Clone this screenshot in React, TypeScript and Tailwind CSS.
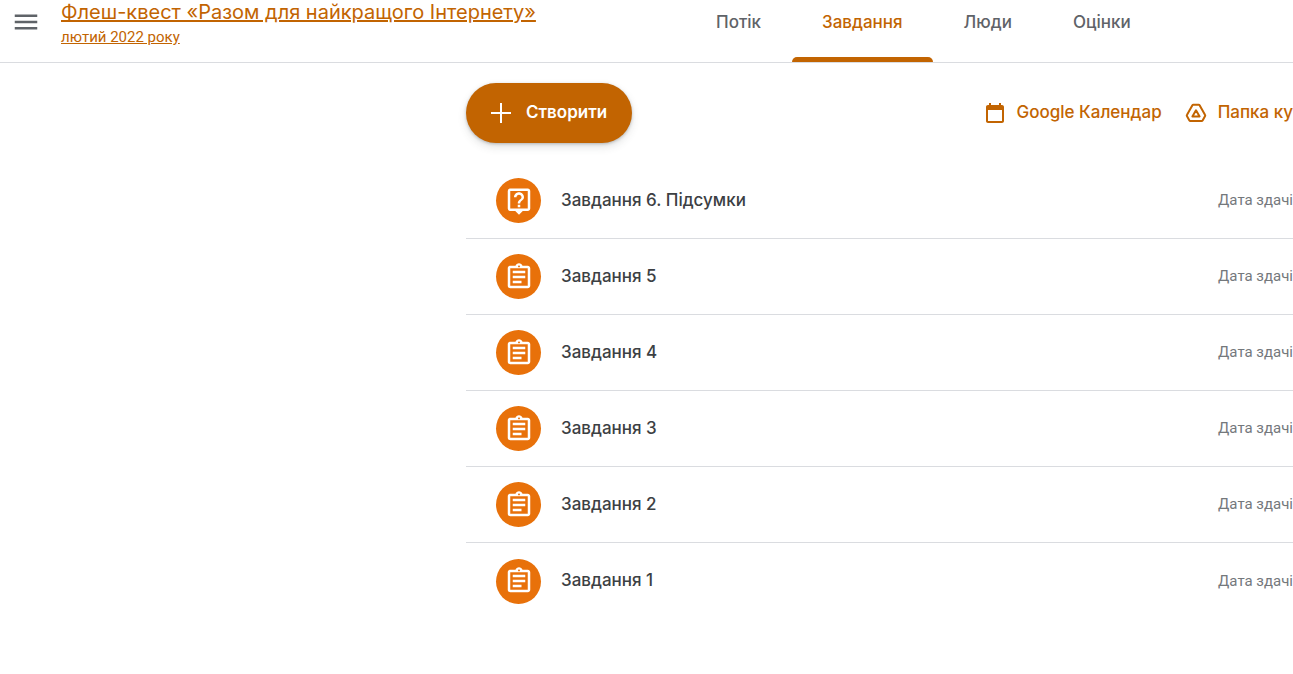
import type { ReactNode } from 'react';
import clsx from 'clsx';

interface Assignment {
  title: string;
  kind: 'question' | 'task';
}

const TABS = ['Потік', 'Завдання', 'Люди', 'Оцінки'];
const ACTIVE_TAB = 'Завдання';

const ASSIGNMENTS: Assignment[] = [
  { title: 'Завдання 6. Підсумки', kind: 'question' },
  { title: 'Завдання 5', kind: 'task' },
  { title: 'Завдання 4', kind: 'task' },
  { title: 'Завдання 3', kind: 'task' },
  { title: 'Завдання 2', kind: 'task' },
  { title: 'Завдання 1', kind: 'task' },
];

const Icon = ({ className, children }: { className: string; children: ReactNode }) => (
  <svg viewBox="0 0 24 24" fill="currentColor" aria-hidden="true" className={clsx('shrink-0', className)}>
    {children}
  </svg>
);

const MenuIcon = () => (
  <Icon className="size-[30px]">
    <path d="M3 18h18v-2H3v2zm0-5h18v-2H3v2zm0-7v2h18V6H3z" />
  </Icon>
);

const PlusIcon = () => (
  <Icon className="size-5">
    <path d="M10.8 0h2.4v10.8H24v2.4H13.2V24h-2.4V13.2H0v-2.4h10.8z" />
  </Icon>
);

const CalendarIcon = () => (
  <Icon className="size-6">
    <path d="M19 4h-1V2h-2v2H8V2H6v2H5c-1.11 0-2 .9-2 2v14c0 1.1.89 2 2 2h14c1.1 0 2-.9 2-2V6c0-1.1-.9-2-2-2zm0 16H5V9h14v11z" />
  </Icon>
);

const DriveIcon = () => (
  <Icon className="size-6">
    <path
      d="M9.300 3.800h5.400q.6 0 .9.500l5.500 9.700q.3.500 0 1l-2.500 4.500q-.3.500-.9.500H6.300q-.6 0-.9-.5L2.900 15q-.3-.5 0-1l5.500-9.700q.3-.5.900-.5zM12 9.300l3.600 6.200H8.400z"
      fill="none"
      stroke="currentColor"
      strokeWidth="2"
      strokeLinejoin="round"
    />
  </Icon>
);

const QuestionIcon = () => (
  <Icon className="size-[30px]">
    <path d="M19 2H5a2 2 0 0 0-2 2v14a2 2 0 0 0 2 2h4l3 3 3-3h4c1.100 0 2-.9 2-2V4c0-1.100-.9-2-2-2zm0 16H5V4h14v14zm-8-3h2v2h-2zm1-8c1.100 0 2 .9 2 2 0 2-3 1.750-3 5h2c0-2.250 3-2.500 3-5 0-2.210-1.790-4-4-4S8 6.790 8 9h2c0-1.100.9-2 2-2z" />
  </Icon>
);

const TaskIcon = () => (
  <Icon className="size-[30px]">
    <path d="M7 15h7v2H7zm0-4h10v2H7zm0-4h10v2H7zm12-4h-4.180C14.400 1.840 13.300 1 12 1c-1.300 0-2.400.84-2.820 2H5c-1.100 0-2 .9-2 2v14c0 1.100.9 2 2 2h14c1.100 0 2-.9 2-2V5c0-1.100-.9-2-2-2zm-7-.25c.41 0 .75.34.75.75s-.34.75-.75.75-.75-.34-.75-.75.34-.75.75-.75zM19 19H5V5h14v14z" />
  </Icon>
);

const Header = () => (
  <header className="flex h-[63px] border-b border-[#dadce0]">
    <div className="flex w-[686px] shrink-0 items-start pl-[11px]">
      <button type="button" aria-label="Головне меню" className="mt-[7px] text-[#5f6368]">
        <MenuIcon />
      </button>
      <a href="#course" className="ml-5 text-[#c26401]">
        <h1 className="text-[20px] leading-6 underline decoration-2">Флеш-квест «Разом для найкращого Інтернету»</h1>
        <p className="font-[Roboto,sans-serif] text-[15px] leading-[26px] underline">лютий 2022 року</p>
      </a>
    </div>
    <nav className="flex gap-px text-[17px] font-medium">
      {TABS.map((tab) => (
        <a
          key={tab}
          href="#tab"
          aria-current={tab === ACTIVE_TAB ? 'page' : undefined}
          className={clsx(
            'flex flex-col justify-between px-[30px] pt-[10px] leading-6',
            tab === ACTIVE_TAB ? 'text-[#c26401]' : 'text-[#5f6368]',
          )}
        >
          {tab}
          {tab === ACTIVE_TAB && <span className="-mx-[30px] h-[5px] rounded-t-[5px] bg-[#c26401]" />}
        </a>
      ))}
    </nav>
  </header>
);

const Toolbar = () => (
  <div className="flex items-center justify-between">
    <button
      type="button"
      className="flex h-[60px] items-center gap-[15px] rounded-full bg-[#c26401] px-[25px] text-[17px] font-semibold text-white shadow-[0_1px_3px_rgba(60,64,67,0.3),0_4px_8px_rgba(60,64,67,0.15)]"
    >
      <PlusIcon />
      Створити
    </button>
    <div className="flex gap-[22px] text-[17px] font-medium text-[#c26401]">
      <a href="#calendar" className="flex items-center gap-[10px]">
        <CalendarIcon />
        Google Календар
      </a>
      <a href="#folder" className="flex items-center gap-[10px]">
        <DriveIcon />
        Папка ку
      </a>
    </div>
  </div>
);

const AssignmentRow = ({ title, kind }: Assignment) => (
  <li className="flex h-[76px] items-center border-b border-[#dadce0] pl-[30px] last:border-b-0">
    <span className="flex size-[45px] items-center justify-center rounded-full bg-[#e8710a] text-white">
      {kind === 'question' ? <QuestionIcon /> : <TaskIcon />}
    </span>
    <span className="ml-5 text-[17px] font-medium text-[#3c4043]">{title}</span>
    <span className="ml-auto font-[Roboto,sans-serif] text-[15px] text-[#74787c]">Дата здачі</span>
  </li>
);

export default function App() {
  return (
    <div className="min-h-screen overflow-x-hidden bg-white font-[Inter,sans-serif]">
      <Header />
      <main className="pt-5 pl-[466px]">
        <Toolbar />
        <ul className="mt-5">
          {ASSIGNMENTS.map((item) => (
            <AssignmentRow key={item.title} {...item} />
          ))}
        </ul>
      </main>
    </div>
  );
}
